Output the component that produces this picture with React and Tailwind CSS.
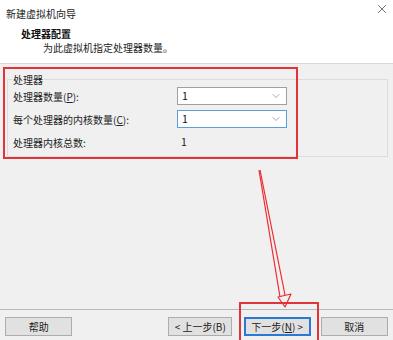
import { ChevronDown, X } from 'lucide-react'

const FONT = { fontFamily: '"Microsoft YaHei", "Noto Sans CJK SC", "Noto Sans", sans-serif' }

function Select({ value, focused }) {
  return (
    <div
      className={`flex items-center justify-between w-[110px] h-[18px] bg-white border px-[4px] ${
        focused ? 'border-[#5aa0e0]' : 'border-[#a0a0a0]'
      }`}
    >
      <span className="text-[10.5px] leading-none text-[#111]">{value}</span>
      <ChevronDown size={12} strokeWidth={1.3} className="text-[#777]" />
    </div>
  )
}

function Btn({ children, primary, className = '' }) {
  return (
    <div
      className={`flex items-center justify-center h-[19px] bg-[#e1e1e1] text-[10px] text-[#222] border ${
        primary ? 'border-[#2a7ad4] border-2' : 'border-[#adadad]'
      } ${className}`}
    >
      {children}
    </div>
  )
}

export default function App() {
  return (
    <div className="relative w-[393px] h-[340px] bg-[#f0f0f0] overflow-hidden select-none" style={FONT}>
      {/* title + header */}
      <div className="bg-white h-[64px] border-b border-[#d8d8d8]">
        <div className="flex items-center justify-between h-[27px] pl-[6px] pr-[4px]">
          <span className="text-[10px] text-[#222]">新建虚拟机向导</span>
          <X size={14} strokeWidth={1.2} className="text-[#333] -mt-[10px]" />
        </div>
        <div className="pl-[21px] text-[10px] font-bold leading-[13px] text-[#111]">处理器配置</div>
        <div className="pl-[43px] pt-[1px] text-[10px] leading-[13px] text-[#222]">为此虚拟机指定处理器数量。</div>
      </div>

      {/* body */}
      <div className="h-[245px] px-[7px] pt-[8px]">
        <div className="relative border border-[#dcdcdc] h-[78px] mt-[7px] w-[381px]">
          <span className="absolute -top-[8px] left-[4px] bg-[#f0f0f0] px-[1px] text-[10px] leading-[16px] text-[#222]">
            处理器
          </span>
          <div className="flex flex-col gap-[5px] pt-[7px] pl-[5px] text-[10px] text-[#222]">
            <div className="flex items-center h-[18px]">
              <span className="w-[164px]">处理器数量(<u>P</u>):</span>
              <Select value="1" />
            </div>
            <div className="flex items-center h-[18px]">
              <span className="w-[164px]">每个处理器的内核数量(<u>C</u>):</span>
              <Select value="1" focused />
            </div>
            <div className="flex items-center h-[18px]">
              <span className="w-[168px]">处理器内核总数:</span>
              <span className="text-[10.5px]">1</span>
            </div>
          </div>
        </div>
      </div>

      {/* footer */}
      <div className="border-t border-[#b8b8b8] h-[31px] flex items-start pt-[7px] px-[5px]">
        <Btn className="w-[68px]">帮助</Btn>
        <Btn className="w-[64px] ml-[96px]">&lt; 上一步(B)</Btn>
        <Btn primary className="w-[67px] ml-[12px]">
          下一步(<u>N</u>) &gt;
        </Btn>
        <Btn className="w-[68px] ml-[10px]">取消</Btn>
      </div>

      {/* annotations */}
      <div className="absolute left-[3px] top-[67px] w-[295px] h-[92px] border-2 border-[#e0333a] pointer-events-none" />
      <div className="absolute left-[239px] top-[302px] w-[80px] h-[40px] border-2 border-[#e0333a] pointer-events-none" />
      <svg className="absolute inset-0 pointer-events-none" width="393" height="340" viewBox="0 0 393 340">
        <g stroke="#ee2a30" strokeWidth="1.2" fill="none" strokeLinejoin="round">
          <path d="M259 170 L280 297" />
          <path d="M260 170 L285 295" />
          <path d="M278 297 L291 294 L285 307 Z" />
        </g>
      </svg>
    </div>
  )
}
